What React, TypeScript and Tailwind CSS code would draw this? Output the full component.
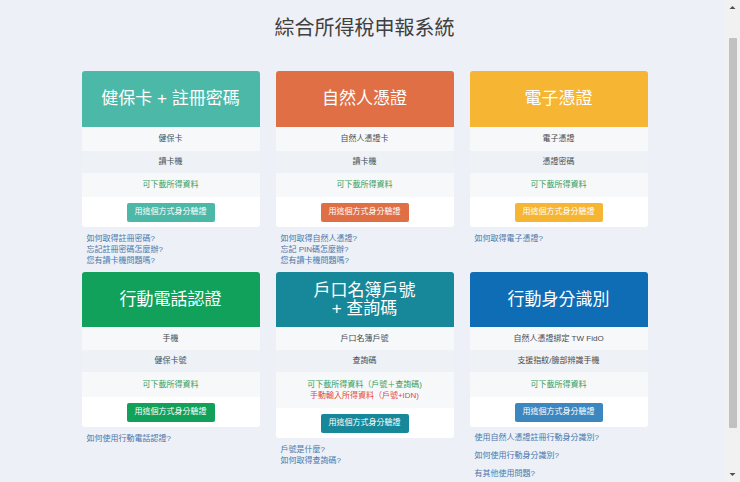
import React from "react"

type Row = { text: React.ReactNode; cls: string }

type Method = {
  title: React.ReactNode
  header: string
  button: string
  rows: Row[]
  links: string[]
  wideLinks?: boolean
}

const GREEN = "text-[#2f9d5f]"

const methods: Method[] = [
  {
    title: "健保卡 + 註冊密碼",
    header: "bg-[#4cb9a8]",
    button: "bg-[#4cb9a8]",
    rows: [
      { text: "健保卡", cls: "h-[24px]" },
      { text: "讀卡機", cls: "h-[22px]" },
      { text: <span className={GREEN}>可下載所得資料</span>, cls: "h-[24px]" },
    ],
    links: ["如何取得註冊密碼?", "忘記註冊密碼怎麼辦?", "您有讀卡機問題嗎?"],
  },
  {
    title: "自然人憑證",
    header: "bg-[#e06f45]",
    button: "bg-[#e06f45]",
    rows: [
      { text: "自然人憑證卡", cls: "h-[24px]" },
      { text: "讀卡機", cls: "h-[22px]" },
      { text: <span className={GREEN}>可下載所得資料</span>, cls: "h-[24px]" },
    ],
    links: ["如何取得自然人憑證?", "忘記 PIN碼怎麼辦?", "您有讀卡機問題嗎?"],
  },
  {
    title: "電子憑證",
    header: "bg-[#f6b532]",
    button: "bg-[#f6b532]",
    rows: [
      { text: "電子憑證", cls: "h-[24px]" },
      { text: "憑證密碼", cls: "h-[22px]" },
      { text: <span className={GREEN}>可下載所得資料</span>, cls: "h-[24px]" },
    ],
    links: ["如何取得電子憑證?"],
  },
  {
    title: "行動電話認證",
    header: "bg-[#11a15a]",
    button: "bg-[#11a15a]",
    rows: [
      { text: "手機", cls: "h-[23px]" },
      { text: "健保卡號", cls: "h-[22px]" },
      { text: <span className={GREEN}>可下載所得資料</span>, cls: "h-[25px]" },
    ],
    links: ["如何使用行動電話認證?"],
  },
  {
    title: (
      <span className="leading-[18px]">
        戶口名簿戶號
        <br />+ 查詢碼
      </span>
    ),
    header: "bg-[#17889a]",
    button: "bg-[#17889a]",
    rows: [
      { text: "戶口名簿戶號", cls: "h-[23px]" },
      { text: "查詢碼", cls: "h-[22px]" },
      {
        text: (
          <span className="leading-[11px]">
            <span className={GREEN}>可下載所得資料（戶號＋查詢碼)</span>
            <br />
            <span className="text-[#e24a40]">手動輸入所得資料（戶號+IDN)</span>
          </span>
        ),
        cls: "h-[36px]",
      },
    ],
    links: ["戶號是什麼?", "如何取得查詢碼?"],
  },
  {
    title: "行動身分識別",
    header: "bg-[#0e6db5]",
    button: "bg-[#3c87bf]",
    rows: [
      { text: "自然人憑證綁定 TW FidO", cls: "h-[23px]" },
      { text: "支援指紋/臉部辨識手機", cls: "h-[22px]" },
      { text: <span className={GREEN}>可下載所得資料</span>, cls: "h-[25px]" },
    ],
    links: ["使用自然人憑證註冊行動身分識別?", "如何使用行動身分識別?", "有其他使用問題?"],
    wideLinks: true,
  },
]

function MethodCard({ m, tall }: { m: Method; tall?: boolean }) {
  return (
    <div className="flex flex-col">
      <div className="overflow-hidden rounded-[3px]">
        <div
          className={`${m.header} ${tall ? "h-[55px]" : "h-[56px]"} flex items-center justify-center text-center text-[17px] text-white`}
        >
          {m.title}
        </div>
        {m.rows.map((r, i) => (
          <div
            key={i}
            className={`${r.cls} ${i % 2 === 0 ? "bg-[#f7f8fa]" : "bg-[#eef1f6]"} flex items-center justify-center text-center text-[8px] text-[#4a4a4a]`}
          >
            {r.text}
          </div>
        ))}
        <div className="flex h-[30px] items-center justify-center bg-white">
          <button className={`${m.button} h-[19px] rounded-[2px] px-[8px] text-[8px] text-white`}>
            用這個方式身分驗證
          </button>
        </div>
      </div>
      <ul className={`${m.wideLinks ? "mt-[2px] leading-[18px]" : "mt-[6px] leading-[11px]"} pl-[5px] text-[8px] text-[#4a76aa]`}>
        {m.links.map((l) => (
          <li key={l}>
            <a href="#" className="hover:underline">
              {l}
            </a>
          </li>
        ))}
      </ul>
    </div>
  )
}

function Scrollbar() {
  return (
    <div className="fixed right-0 top-0 flex h-screen w-[15px] flex-col items-center bg-[#f1f1f1]">
      <svg width="15" height="15" viewBox="0 0 15 15" className="shrink-0">
        <path d="M4.5 9 L7.5 6 L10.5 9 Z" fill="#505050" />
      </svg>
      <div className="mt-[23px] h-[390px] w-[8px] rounded-[1px] bg-[#c1c1c1]" />
      <div className="flex-1" />
      <svg width="15" height="15" viewBox="0 0 15 15" className="shrink-0">
        <path d="M4.5 6 L7.5 9 L10.5 6 Z" fill="#505050" />
      </svg>
    </div>
  )
}

export default function App() {
  return (
    <div className="min-h-screen bg-[#edf0f6] pb-[80px] pl-[4px] pr-[15px] font-['Liberation_Sans','Noto_Sans_CJK_TC',sans-serif]">
      <h1 className="pt-[16px] text-center text-[20px] leading-[24px] text-[#404040]">綜合所得稅申報系統</h1>
      <div className="mx-auto mt-[31px] grid w-[566px] grid-cols-3 gap-x-4 gap-y-[6px]">
        {methods.slice(0, 3).map((m, i) => (
          <MethodCard key={i} m={m} />
        ))}
        {methods.slice(3).map((m, i) => (
          <MethodCard key={i + 3} m={m} tall />
        ))}
      </div>
      <Scrollbar />
    </div>
  )
}
